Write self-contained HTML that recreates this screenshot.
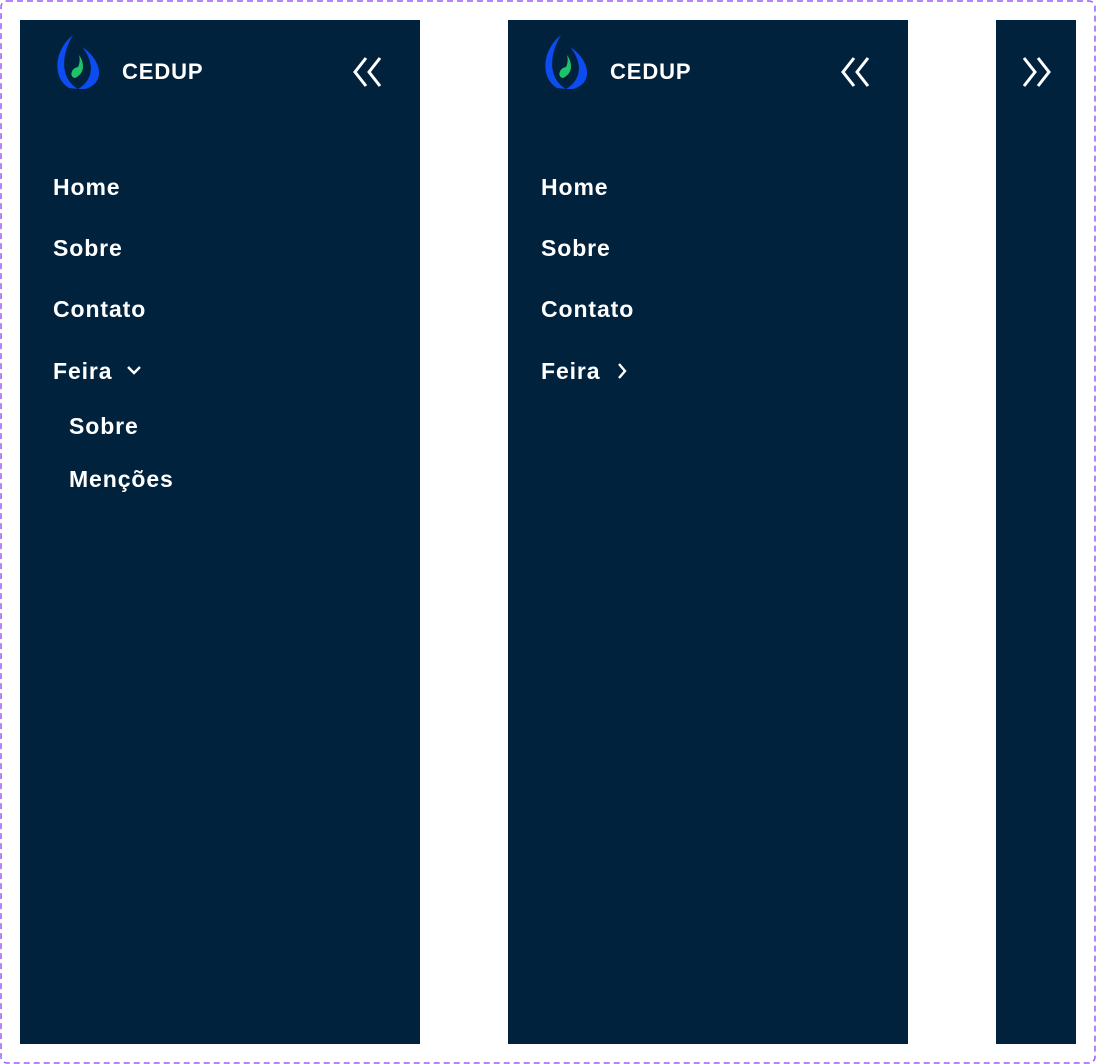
<!DOCTYPE html>
<html><head><meta charset="utf-8"><style>
*{margin:0;padding:0;box-sizing:border-box}
body{width:1096px;height:1064px;background:#fff;position:relative;overflow:hidden;font-family:"Liberation Sans",Arial,sans-serif}
.p{position:absolute;top:20px;height:1024px;background:#01223d}
.t{position:absolute;color:#fff;font-weight:bold;font-size:23px;line-height:26px;white-space:nowrap;letter-spacing:0.9px}
svg{position:absolute}
</style></head><body>
<svg style="left:0;top:0" width="1096" height="1064"><rect x="1" y="1" width="1094" height="1062" rx="6" fill="none" stroke="#9b5cff" stroke-width="1.5" stroke-dasharray="6 4"/></svg>

<div class="p" style="left:20px;width:400px">
  <svg style="left:34px;top:13px" width="48" height="58" viewBox="0 0 46 58">
    <path d="M18,2 C0,16 -4,44 14,55 L23,56 C6,46 5,24 18,2 Z" fill="#0d4cf0"/>
    <path d="M27,14 C46,26 52,50 30,56 L23,56 C40,46 39,28 27,14 Z" fill="#0d4cf0"/>
    <path d="M24,22 C29,29 31,40 20,45 C14,44 16,35 23,34 C25,30 25,26 24,22 Z" fill="#1fc46a"/>
  </svg>
  <div class="t" style="left:102px;top:39px;font-size:22px">CEDUP</div>
  <svg style="left:333px;top:36px" width="30" height="32" viewBox="0 0 30 32"><path d="M13,2 L2,16 L13,30 M27,2 L16,16 L27,30" fill="none" stroke="#fff" stroke-width="3"/></svg>
  <div class="t" style="left:33px;top:154px">Home</div>
  <div class="t" style="left:33px;top:215px">Sobre</div>
  <div class="t" style="left:33px;top:276px">Contato</div>
  <div class="t" style="left:33px;top:338px">Feira</div>
  <svg style="left:106px;top:344px" width="16" height="12" viewBox="0 0 16 12"><path d="M2,3 L8,9 L14,3" fill="none" stroke="#fff" stroke-width="2.4"/></svg>
  <div class="t" style="left:49px;top:393px">Sobre</div>
  <div class="t" style="left:49px;top:446px">Menções</div>
</div>

<div class="p" style="left:508px;width:400px">
  <svg style="left:34px;top:13px" width="48" height="58" viewBox="0 0 46 58">
    <path d="M18,2 C0,16 -4,44 14,55 L23,56 C6,46 5,24 18,2 Z" fill="#0d4cf0"/>
    <path d="M27,14 C46,26 52,50 30,56 L23,56 C40,46 39,28 27,14 Z" fill="#0d4cf0"/>
    <path d="M24,22 C29,29 31,40 20,45 C14,44 16,35 23,34 C25,30 25,26 24,22 Z" fill="#1fc46a"/>
  </svg>
  <div class="t" style="left:102px;top:39px;font-size:22px">CEDUP</div>
  <svg style="left:333px;top:36px" width="30" height="32" viewBox="0 0 30 32"><path d="M13,2 L2,16 L13,30 M27,2 L16,16 L27,30" fill="none" stroke="#fff" stroke-width="3"/></svg>
  <div class="t" style="left:33px;top:154px">Home</div>
  <div class="t" style="left:33px;top:215px">Sobre</div>
  <div class="t" style="left:33px;top:276px">Contato</div>
  <div class="t" style="left:33px;top:338px">Feira</div>
  <svg style="left:108px;top:342px" width="12" height="18" viewBox="0 0 12 18"><path d="M3,2 L9,9 L3,16" fill="none" stroke="#fff" stroke-width="2.4"/></svg>
</div>

<div class="p" style="left:996px;width:80px">
  <svg style="left:25px;top:36px" width="30" height="32" viewBox="0 0 30 32"><path d="M3,2 L14,16 L3,30 M17,2 L28,16 L17,30" fill="none" stroke="#fff" stroke-width="3"/></svg>
</div>
</body></html>
